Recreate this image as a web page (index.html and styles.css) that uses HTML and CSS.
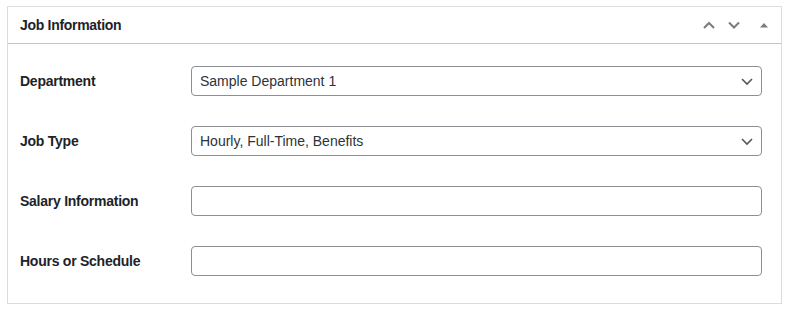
FILE: index.html
```html
<!DOCTYPE html>
<html lang="en">
<head>
  <meta charset="UTF-8">
  <title>Job Information</title>
  <link rel="stylesheet" href="styles.css">
</head>
<body>

<div class="postbox">
  <div class="postbox-header">
    <h2>Job Information</h2>
    <div class="handle-actions">
      <button class="handle up" aria-label="Move up">
        <svg width="16" height="16" viewBox="0 0 16 16"><path d="M3 11 L8 6 L13 11" fill="none" stroke="currentColor" stroke-width="2"/></svg>
      </button>
      <button class="handle down" aria-label="Move down">
        <svg width="16" height="16" viewBox="0 0 16 16"><path d="M3 5.5 L8 10.5 L13 5.5" fill="none" stroke="currentColor" stroke-width="2"/></svg>
      </button>
      <button class="handle toggle" aria-label="Toggle panel">
        <svg width="10" height="10" viewBox="0 0 10 10"><path d="M1 7.5 L5 3 L9 7.5 Z" fill="currentColor"/></svg>
      </button>
    </div>
  </div>

  <div class="inside">
    <div class="row">
      <label for="department">Department</label>
      <div class="select-wrap">
        <select id="department">
          <option>Sample Department 1</option>
        </select>
        <svg class="caret" width="16" height="16" viewBox="0 0 16 16"><path d="M3 6 L8 11 L13 6" fill="none" stroke="currentColor" stroke-width="1.6"/></svg>
      </div>
    </div>
    <div class="row">
      <label for="job-type">Job Type</label>
      <div class="select-wrap">
        <select id="job-type">
          <option>Hourly, Full-Time, Benefits</option>
        </select>
        <svg class="caret" width="16" height="16" viewBox="0 0 16 16"><path d="M3 6 L8 11 L13 6" fill="none" stroke="currentColor" stroke-width="1.6"/></svg>
      </div>
    </div>
    <div class="row">
      <label for="salary">Salary Information</label>
      <input type="text" id="salary">
    </div>
    <div class="row">
      <label for="hours">Hours or Schedule</label>
      <input type="text" id="hours">
    </div>
  </div>
</div>

</body>
</html>
```

FILE: styles.css
```css
* { box-sizing: border-box; margin: 0; padding: 0; }
body { background: #fff; font-family: "Liberation Sans", Arial, sans-serif; font-size: 14px; color: #1d2327; }

.postbox {
  width: 775px;
  height: 298px;
  margin: 6px 0 0 7px;
  border: 1px solid #dcdcde;
  background: #fff;
}

.postbox-header {
  display: flex;
  align-items: center;
  justify-content: space-between;
  height: 37px;
  border-bottom: 1px solid #c3c4c7;
  padding-left: 12px;
}
.postbox-header h2 {
  font-size: 14px;
  font-weight: 600;
  letter-spacing: -0.3px;
}

.handle-actions { display: flex; align-items: center; }
.handle {
  width: 24px;
  height: 36px;
  border: none;
  background: none;
  color: #787c82;
  display: flex; align-items: center; justify-content: center;
  cursor: pointer;
}
.handle.down { width: 26px; }
.handle.toggle { width: 34px; }

.inside { padding: 7px 19px 12px 12px; }

.row {
  display: flex;
  align-items: center;
  height: 60px;
}
.row label {
  width: 171px;
  flex-shrink: 0;
  font-weight: 600;
  letter-spacing: -0.25px;
}

.select-wrap { position: relative; flex: 1; }
select, input[type="text"] {
  width: 100%;
  height: 30px;
  border: 1px solid #8c8f94;
  border-radius: 4px;
  background: #fff;
  color: #2c3338;
  font: inherit;
  padding: 0 24px 0 8px;
  appearance: none;
  -webkit-appearance: none;
}
input[type="text"] { flex: 1; width: auto; }
/* chevron over the select */
.select-wrap .caret {
  position: absolute;
  right: 7px;
  top: 7px;
  color: #50575e;
  pointer-events: none;
}
```
